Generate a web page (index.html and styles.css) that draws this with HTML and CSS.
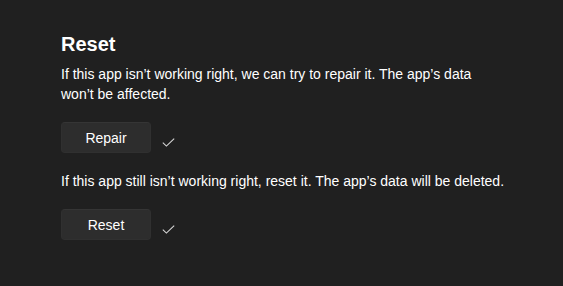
FILE: index.html
```html
<!DOCTYPE html>
<html>
<head>
<meta charset="utf-8">
<link rel="stylesheet" href="styles.css">
</head>
<body>
<section class="reset">
  <h2 class="title">Reset</h2>
  <p class="desc">If this app isn’t working right, we can try to repair it. The app’s data won’t be affected.</p>
  <div class="action">
    <button class="btn">Repair</button>
    <svg class="check" width="13" height="9" viewBox="0 0 13 9"><path d="M0.8 4.6 L4.4 8.1 L12.2 0.6" fill="none" stroke="#d6d6d6" stroke-width="1.1"/></svg>
  </div>
  <p class="desc">If this app still isn’t working right, reset it. The app’s data will be deleted.</p>
  <div class="action">
    <button class="btn">Reset</button>
    <svg class="check" width="13" height="9" viewBox="0 0 13 9"><path d="M0.8 4.6 L4.4 8.1 L12.2 0.6" fill="none" stroke="#d6d6d6" stroke-width="1.1"/></svg>
  </div>
</section>
</body>
</html>
```
FILE: styles.css
```css
html, body {
  margin: 0;
  padding: 0;
  background: #202020;
}
body {
  font-family: "Segoe UI", "Liberation Sans", Arial, sans-serif;
  color: #ffffff;
  width: 563px;
  height: 286px;
  overflow: hidden;
}
.reset {
  padding: 30px 0 0 61px;
}
.title {
  margin: 0;
  font-size: 20px;
  line-height: 28px;
  font-weight: 600;
}
.desc {
  margin: 6px 0 0 0;
  width: 446px;
  font-size: 14px;
  line-height: 20px;
}
.action {
  display: flex;
  align-items: flex-end;
  gap: 11px;
  margin: 18px 0 18px 0;
}
.btn {
  width: 90px;
  height: 31px;
  background: #2d2d2d;
  border: 1px solid #303030;
  border-top-color: #353535;
  border-radius: 4px;
  color: #ffffff;
  font-family: inherit;
  font-size: 14px;
  padding: 0;
}
.check {
  margin-bottom: 6px;
}
```
